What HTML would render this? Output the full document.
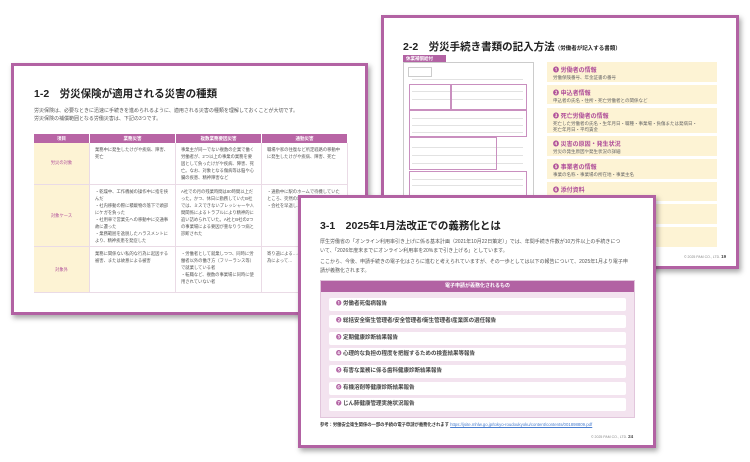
<!DOCTYPE html>
<html><head><meta charset="utf-8"><style>
*{margin:0;padding:0;box-sizing:border-box}
body{width:750px;height:462px;background:#fff;position:relative;overflow:hidden;font-family:"Liberation Sans","Noto Sans CJK JP",sans-serif;color:#333}
.pg{position:absolute;background:#fff;border:3px solid #b262a3;box-shadow:2px 3px 5px rgba(0,0,0,.35)}
.a{position:absolute;white-space:nowrap}
.t{font-weight:bold;font-size:10.5px;color:#222}
.s{font-size:5px;color:#555;line-height:8px}
.th{position:absolute;background:#b865a5;color:#fff;font-size:4.5px;text-align:center;line-height:9px;font-weight:bold}
.cell{position:absolute;border-right:1px solid #eadbe6;border-bottom:1px solid #eadbe6;font-size:4.3px;line-height:7px;color:#555;padding:3px 5px;white-space:normal}
.rb{position:absolute;left:163px;width:170px;background:#fdf3d4}
.rb b{display:block;color:#b0509a;font-size:6px;margin:3px 0 0 6px}
.rb i{display:block;font-style:normal;font-size:4.5px;color:#666;margin:1px 0 0 6px;line-height:6px}
.it{position:absolute;left:8px;width:297px;height:13px;background:#fff;border-radius:2px;font-size:5.5px;font-weight:bold;color:#444;line-height:13px;padding-left:7px}
.it span{color:#b262a3}
.fb{position:absolute;border:1px solid #c98fbf}
.fl{position:absolute;left:8px;right:10px;height:1px;background:#e2e2e2}
</style></head><body>

<div class="pg" style="left:11px;top:63px;width:357px;height:252px">
 <div class="a t" style="left:20px;top:20px">1-2　労災保険が適用される災害の種類</div>
 <div class="a s" style="left:20px;top:41px">労災保険は、必要なときに迅速に手続きを進められるように、適用される災害の種類を理解しておくことが大切です。<br>労災保険の補償範囲となる労働災害は、下記の3つです。</div>
 <div class="th" style="left:20px;top:68px;width:55px">項目</div>
 <div class="th" style="left:76px;top:68px;width:85px">業務災害</div>
 <div class="th" style="left:162px;top:68px;width:85px">複数業務要因災害</div>
 <div class="th" style="left:248px;top:68px;width:85px">通勤災害</div>
 <div class="cell" style="left:20px;top:77px;width:56px;height:42px;background:#fdf3d4;color:#b0509a;text-align:center;padding-top:16px">労災の対象</div>
 <div class="cell" style="left:76px;top:77px;width:86px;height:42px">業務中に発生したけがや疾病、障害、死亡</div>
 <div class="cell" style="left:162px;top:77px;width:86px;height:42px">事業主が同一でない複数の企業で働く労働者が、2つ以上の事業の業務を要因として負ったけがや疾病、障害、死亡。なお、対象となる傷病等は脳や心臓の疾患、精神障害など</div>
 <div class="cell" style="left:248px;top:77px;width:86px;height:42px">職場や家の往復など所定経路の移動中に発生したけがや疾病、障害、死亡</div>
 <div class="cell" style="left:20px;top:119px;width:56px;height:62px;background:#fdf3d4;color:#b0509a;text-align:center;padding-top:27px">対象ケース</div>
 <div class="cell" style="left:76px;top:119px;width:86px;height:62px">・乾燥中、工作機械の操作中に指を挟んだ<br>・社内移動の際に積載物の落下で頭部にケガを負った<br>・社用車で営業先への移動中に交通事故に遭った<br>・業務範囲を逸脱したハラスメントにより、精神疾患を発症した</div>
 <div class="cell" style="left:162px;top:119px;width:86px;height:62px">A社での月の残業時間は80時間以上だった。かつ、休日に勤務していたB社では、ミスできないプレッシャーや人間関係によるトラブルにより精神的に追い詰められていた。A社とB社の2つの事業場による要因が重なりうつ病と診断された</div>
 <div class="cell" style="left:248px;top:119px;width:86px;height:62px">・通勤中に駅のホームで待機していたところ、突然の地震で…<br>・会社を早退し…帰りに事故に…</div>
 <div class="cell" style="left:20px;top:181px;width:56px;height:46px;background:#fdf3d4;color:#b0509a;text-align:center;padding-top:19px">対象外</div>
 <div class="cell" style="left:76px;top:181px;width:86px;height:46px">業務に関係ない私的な行為に起因する被害、または故意による被害</div>
 <div class="cell" style="left:162px;top:181px;width:86px;height:46px">・労働者として就業しつつ、同時に労働者以外の働き方（フリーランス等）で就業している者<br>・転職など、複数の事業場に同時に使用されていない者</div>
 <div class="cell" style="left:248px;top:181px;width:86px;height:46px">寄り道による…ことによる被害…い行為によって…</div>
</div>

<div class="pg" style="left:381px;top:15px;width:358px;height:254px">
 <div class="a t" style="left:19px;top:21px">2-2　労災手続き書類の記入方法<span style="font-size:5.5px">（労働者が記入する書類）</span></div>
 <div class="a" style="left:19px;top:37px;width:43px;height:7px;background:#b262a3;color:#fff;font-size:4.5px;line-height:7px;padding-left:3px;font-weight:bold">休業補償給付</div>
 <div class="a" style="left:19px;top:44px;width:131px;height:140px;border:1px solid #ccc;background:#fff">
  <div class="a" style="left:4px;top:4px;width:24px;height:10px;border:1px solid #ccc"></div>
  <div class="fl" style="top:16px"></div><div class="fl" style="top:28px"></div><div class="fl" style="top:36px"></div>
  <div class="fl" style="top:55px"></div><div class="fl" style="top:62px"></div><div class="fl" style="top:69px"></div>
  <div class="fl" style="top:84px"></div><div class="fl" style="top:92px"></div><div class="fl" style="top:100px"></div>
  <div class="fl" style="top:116px"></div><div class="fl" style="top:122px"></div>
  <div class="fb" style="left:5px;top:21px;width:42px;height:26px"></div>
  <div class="fb" style="left:47px;top:21px;width:76px;height:26px"></div>
  <div class="fb" style="left:5px;top:47px;width:118px;height:27px"></div>
  <div class="fb" style="left:5px;top:74px;width:88px;height:33px"></div>
  <div class="fb" style="left:5px;top:108px;width:118px;height:25px"></div>
 </div>
 <div class="rb" style="top:44px;height:20px"><b>❶ 労働者の情報</b><i>労働保険番号、年金証書の番号</i></div>
 <div class="rb" style="top:67px;height:19px"><b>❷ 申込者情報</b><i>申込者の氏名・住所・死亡労働者との関係など</i></div>
 <div class="rb" style="top:90px;height:25px"><b>❸ 死亡労働者の情報</b><i>死亡した労働者の氏名・生年月日・職種・事業場・負傷または発病日・<br>死亡年月日・平均賃金</i></div>
 <div class="rb" style="top:118px;height:20px"><b>❹ 災害の原因・発生状況</b><i>労災の発生原因や発生状況の詳細</i></div>
 <div class="rb" style="top:141px;height:20px"><b>❺ 事業者の情報</b><i>事業の名称・事業場の所在地・事業主名</i></div>
 <div class="rb" style="top:164px;height:19px"><b>❻ 添付資料</b><i>添付書類の種類</i></div>
 <div class="rb" style="top:186px;height:20px"></div>
 <div class="rb" style="top:209px;height:20px"></div>
 <div class="a" style="left:300px;top:236px;font-size:3.5px;color:#888">© 2025 PAM CO., LTD. <b style="color:#444;font-size:4.5px">19</b></div>
</div>

<div class="pg" style="left:298px;top:195px;width:358px;height:253px">
 <div class="a t" style="left:19px;top:20px">3-1　2025年1月法改正での義務化とは</div>
 <div class="a s" style="left:19px;top:40px;line-height:9px">厚生労働省の「オンライン利用率引き上げに係る基本計画（2021年10月22日策定）」では、年間手続き件数が10万件以上の手続きにつ<br>いて、「2026年度末までにオンライン利用率を20%まで引き上げる」としています。</div>
 <div class="a s" style="left:19px;top:60px;line-height:9px">ここから、今後、申請手続きの電子化はさらに進むと考えられていますが、その一歩としては以下の報告について、2025年1月より電子申<br>請が義務化されます。</div>
 <div class="a" style="left:19px;top:82px;width:315px;height:138px;background:#f3e3ef;border:1px solid #e2c6dc">
  <div class="a" style="left:0;top:0;width:313px;height:11px;background:#b262a3;color:#fff;font-size:5px;font-weight:bold;text-align:center;line-height:11px">電子申請が義務化されるもの</div>
  <div class="it" style="top:17px"><span>❶</span> 労働者死傷病報告</div>
  <div class="it" style="top:34px"><span>❷</span> 総括安全衛生管理者/安全管理者/衛生管理者/産業医の選任報告</div>
  <div class="it" style="top:51px"><span>❸</span> 定期健康診断結果報告</div>
  <div class="it" style="top:67px"><span>❹</span> 心理的な負担の程度を把握するための検査結果等報告</div>
  <div class="it" style="top:84px"><span>❺</span> 有害な業務に係る歯科健康診断結果報告</div>
  <div class="it" style="top:101px"><span>❻</span> 有機溶剤等健康診断結果報告</div>
  <div class="it" style="top:117px"><span>❼</span> じん肺健康管理実施状況報告</div>
 </div>
 <div class="a" style="left:19px;top:224px;font-size:4.3px;color:#333;font-weight:bold">参考：労働安全衛生関係の一部の手続の電子申請が義務化されます <span style="color:#4a7fd0;font-weight:normal;text-decoration:underline">https://jsite.mhlw.go.jp/tokyo-roudoukyoku/content/contents/001898809.pdf</span></div>
 <div class="a" style="left:290px;top:236px;font-size:3.5px;color:#888">© 2025 PAM CO., LTD. <b style="color:#444;font-size:4.5px">24</b></div>
</div>
</body></html>
